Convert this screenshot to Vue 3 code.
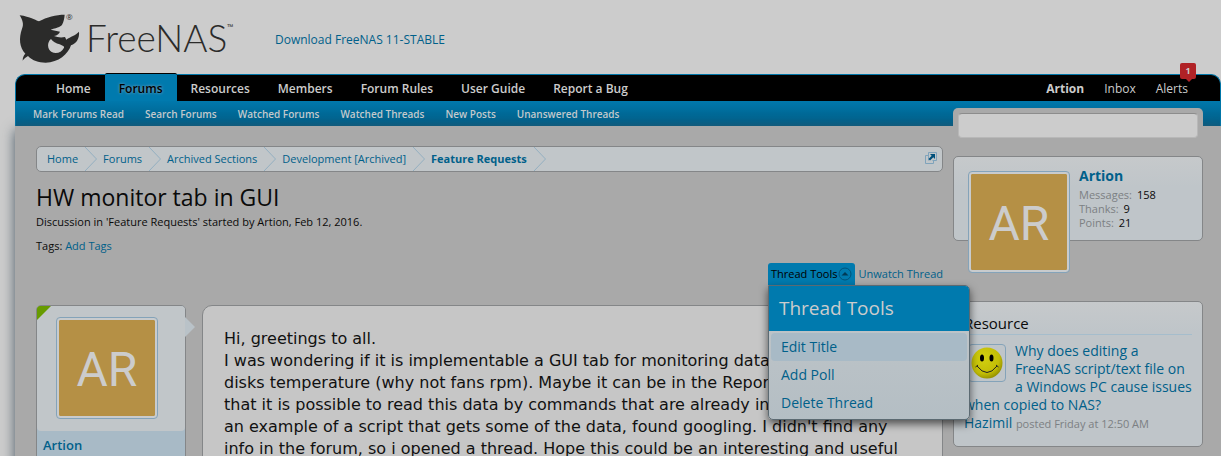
<template>
  <div class="page">
    <header class="masthead">
      <a class="brand" href="#" aria-label="FreeNAS">
        <svg class="brand-mark" viewBox="54 34 186 156" aria-hidden="true">
          <path
            fill-rule="evenodd"
            d="M59 44C75 46 88 50 95 53C102 56 110 60 117 62C140 49 168 42 194 42C193 54 191 62 187 71C184 77 176 81 152 87L180 93C177 99 172 104 162 106C172 110 183 112 195 109L199 117C212 107 226 105 237 93C239 112 230 128 213 134C205 160 175 186 137 186C115 186 98 180 84 166C78 170 72 174 68 180C68 170 71 164 76 159C58 140 56 112 66 84C72 72 68 58 59 44ZM153 115C141 124 141 146 155 154C169 161 185 155 192 141C194 137 188 135 179 131C168 128 158 122 153 115Z"
          />
        </svg>
        <sup class="reg">®</sup>
        <span class="brand-name">FreeNAS</span>
        <sup class="tm">™</sup>
      </a>
      <a class="download" href="#">Download FreeNAS 11-STABLE</a>
    </header>

    <nav class="navigation">
      <div class="tabs">
        <a v-for="tab in tabs" :key="tab" href="#" class="tab" :class="{ selected: tab === 'Forums' }">{{ tab }}</a>
        <div class="account">
          <a href="#" class="account-name">Artion</a>
          <a href="#">Inbox</a>
          <a href="#" class="alerts">Alerts<span class="balloon">1</span></a>
        </div>
      </div>
      <div class="sub-links">
        <a v-for="link in subLinks" :key="link" href="#">{{ link }}</a>
      </div>
    </nav>

    <div class="content">
      <main class="main">
        <nav class="breadcrumb" aria-label="Breadcrumb">
          <a v-for="crumb in crumbs" :key="crumb" href="#" class="crumb">
            {{ crumb }}
            <svg class="arrow" viewBox="0 0 12 24" aria-hidden="true"><path d="M0 0L11.500 12L0 24" /></svg>
          </a>
          <button type="button" class="jump" aria-label="Open quick navigation">
            <svg viewBox="0 0 14 14" aria-hidden="true">
              <path class="jump-box" d="M4 4.500H1.500V12.500H9.500V10M4.500 9.500V1.500H12.500V9.500H8.500" />
              <path class="jump-arrow" d="M6 3H11V8L9.300 6.300L6 9.500L4.500 8L7.700 4.700Z" />
            </svg>
          </button>
        </nav>

        <h1>HW monitor tab in GUI</h1>
        <p class="description">Discussion in 'Feature Requests' started by Artion, Feb 12, 2016.</p>
        <p class="tags">Tags: <a href="#">Add Tags</a></p>

        <div class="thread-links">
          <div class="popup">
            <button type="button" class="popup-control" aria-expanded="true">
              Thread Tools
              <svg viewBox="0 0 14 14" aria-hidden="true">
                <circle cx="7" cy="7" r="6" />
                <path d="M3.500 8.500L7 5L10.500 8.500Z" />
              </svg>
            </button>
            <div class="menu">
              <h3>Thread Tools</h3>
              <ul>
                <li v-for="(item, i) in menuItems" :key="item">
                  <a href="#" :class="{ active: i === 0 }">{{ item }}</a>
                </li>
              </ul>
            </div>
          </div>
          <a href="#">Unwatch Thread</a>
        </div>

        <article class="message">
          <aside class="user-card">
            <div class="avatar-holder">
              <span class="avatar">AR</span>
            </div>
            <a href="#" class="username">Artion</a>
          </aside>
          <div class="message-body">
            <template v-for="(line, i) in message" :key="i">{{ line }}<br /></template>
          </div>
        </article>
      </main>

      <aside class="sidebar">
        <form class="search" @submit.prevent>
          <input v-model="query" type="text" aria-label="Search" />
        </form>

        <section class="panel visitor">
          <span class="avatar">AR</span>
          <div class="visitor-info">
            <a href="#" class="visitor-name">Artion</a>
            <dl v-for="stat in stats" :key="stat.label">
              <dt>{{ stat.label }}:</dt>
              <dd>{{ stat.value }}</dd>
            </dl>
          </div>
        </section>

        <section class="panel resource">
          <h3>Resource</h3>
          <a href="#" class="thumb" aria-label="Hazimil">
            <svg viewBox="0 0 32 32" aria-hidden="true">
              <defs>
                <radialGradient id="face" cx="0.4" cy="0.35" r="0.7">
                  <stop offset="0" stop-color="#d2d010" />
                  <stop offset="0.7" stop-color="#c2bd06" />
                  <stop offset="1" stop-color="#8f8b00" />
                </radialGradient>
              </defs>
              <circle cx="16" cy="16" r="15.500" fill="url(#face)" />
              <ellipse cx="11" cy="11" rx="2" ry="3.500" />
              <ellipse cx="20.500" cy="11" rx="2" ry="3.500" />
              <path d="M6 19Q16 32 26 19M4.500 20L7 18M25 18L27.500 20" class="smile" />
            </svg>
          </a>
          <p>
            <a href="#">Why does editing a FreeNAS script/text file on a Windows PC cause issues when copied to NAS?</a>
          </p>
          <p><a href="#">Hazimil</a> <span class="posted">posted Friday at 12:50 AM</span></p>
        </section>
      </aside>
    </div>
  </div>
</template>

<script setup>
import { ref } from "vue"

const query = ref("")

const tabs = ["Home", "Forums", "Resources", "Members", "Forum Rules", "User Guide", "Report a Bug"]
const subLinks = ["Mark Forums Read", "Search Forums", "Watched Forums", "Watched Threads", "New Posts", "Unanswered Threads"]
const crumbs = ["Home", "Forums", "Archived Sections", "Development [Archived]", "Feature Requests"]
const menuItems = ["Edit Title", "Add Poll", "Delete Thread"]
const stats = [
  { label: "Messages", value: 158 },
  { label: "Thanks", value: 9 },
  { label: "Points", value: 21 },
]
const message = [
  "Hi, greetings to all.",
  "I was wondering if it is implementable a GUI tab for monitoring data like",
  "disks temperature (why not fans rpm). Maybe it can be in the Reporting. I see",
  "that it is possible to read this data by commands that are already in. This is",
  "an example of a script that gets some of the data, found googling. I didn't find any",
  "info in the forum, so i opened a thread. Hope this could be an interesting and useful",
]
</script>

<style>
html {
  background: #cccccc;
  scrollbar-width: none;
}
</style>

<style scoped>
.page {
  padding-left: 15px;
  font-family: "Open Sans", "Trebuchet MS", sans-serif;
  font-size: 11px;
  line-height: 14px;
  color: #0a0a0a;
}

a {
  color: #00608a;
  text-decoration: none;
}

h1, h3, p, ul, dl, dd {
  margin: 0;
  padding: 0;
  font-weight: 400;
}

ul {
  list-style: none;
}

button {
  border: none;
  padding: 0;
  background: none;
  font: inherit;
  cursor: pointer;
}

.masthead {
  display: flex;
  align-items: center;
  height: 74px;
  padding-top: 1px;
  box-sizing: border-box;
}

.brand {
  display: flex;
  align-items: center;
  width: 260px;
  padding-left: 3px;
  box-sizing: border-box;
  color: #2b2b2a;
}

.brand-mark {
  width: 62px;
  height: 52px;
  fill: currentColor;
}

.reg,
.tm {
  align-self: flex-start;
  font-size: 8px;
  line-height: 10px;
  width: 8px;
}

.reg {
  margin-left: -14px;
}

.tm {
  margin-top: 10px;
}

.brand-name {
  margin-left: 12px;
  font-family: Lato, sans-serif;
  font-size: 37px;
  font-weight: 300;
  line-height: 48px;
}

.download {
  padding-top: 4px;
  font-size: 12px;
  line-height: 16px;
}

.navigation {
  border: 1px solid #0076a8;
  border-bottom: none;
  border-radius: 10px 10px 0 0;
  background: #000;
}

.tabs {
  display: flex;
  height: 26px;
  padding: 0 22px 0 26px;
}

.tabs a {
  padding: 0 14px;
  color: #cccccc;
  font-size: 12px;
  font-weight: 600;
  line-height: 27px;
}

.tabs .selected {
  margin-top: -2px;
  border-top: 1px solid #000;
  border-radius: 2px 2px 0 0;
  background: #007aae;
  color: #000;
  line-height: 30px;
  text-shadow: 0 0 3px #9ab;
}

.account {
  display: flex;
  margin-left: auto;
}

.account a {
  padding: 0 10px;
  font-weight: 400;
}

.account .account-name {
  font-weight: 700;
}

.alerts {
  position: relative;
}

.balloon {
  position: absolute;
  top: -12px;
  right: 2px;
  width: 16px;
  border-radius: 2px;
  background: #b02226;
  font-size: 9px;
  font-weight: 700;
  line-height: 16px;
  text-align: center;
}

.balloon::after {
  content: "";
  position: absolute;
  top: 16px;
  right: 4px;
  border: 3px solid transparent;
  border-top-color: #b02226;
  border-bottom: none;
}

.sub-links {
  display: flex;
  gap: 21px;
  height: 25px;
  padding-left: 17px;
  background: linear-gradient(#0078ac, #005c84);
}

.sub-links a {
  color: #c4cacd;
  font-size: 10px;
  font-weight: 600;
  line-height: 26px;
}

.content {
  display: grid;
  grid-template-columns: minmax(0, 1fr) 250px;
  gap: 10px;
  padding: 0 18px 20px 21px;
  background: #a9a9a9;
  box-shadow: 0 4px 12px #4a5a66;
  clip-path: inset(-18px 0 0 -15px);
}

.main {
  padding-top: 20px;
}

.breadcrumb {
  display: flex;
  height: 24px;
  padding-left: 4px;
  border: 1px solid #848688;
  border-radius: 5px;
  background: #c1c6c9;
}

.crumb {
  display: flex;
  gap: 7px;
  padding-left: 6px;
  line-height: 24px;
}

.crumb:nth-of-type(5) {
  font-weight: 700;
}

.arrow {
  width: 12px;
  height: 24px;
  fill: none;
  stroke: #93afc0;
}

.jump {
  width: 14px;
  height: 14px;
  margin: 4px 4px 0 auto;
}

.jump svg {
  display: block;
}

.jump-box {
  fill: none;
  stroke: #7fa3bb;
}

.jump-arrow {
  fill: #004f7a;
}

h1 {
  margin-top: 10px;
  font-size: 23px;
  line-height: 30px;
}

.description {
  margin-top: 3px;
}

.tags {
  margin-top: 10px;
}

.thread-links {
  display: flex;
  justify-content: flex-end;
  gap: 3px;
  margin-top: 10px;
  line-height: 22px;
}

.popup {
  position: relative;
}

.popup-control {
  display: flex;
  align-items: center;
  gap: 1px;
  height: 22px;
  padding: 0 3px;
  border-radius: 3px 3px 0 0;
  background: #007aae;
  color: #000;
}

.popup-control svg {
  width: 14px;
  height: 14px;
}

.popup-control circle {
  fill: none;
  stroke: #00537a;
}

.popup-control path {
  fill: #003a57;
}

.menu {
  position: absolute;
  z-index: 2;
  top: 22px;
  left: 0;
  width: 202px;
  box-sizing: border-box;
  border: 1px solid #5c6a72;
  border-radius: 0 5px 5px 5px;
  background: linear-gradient(#c1c6c9, #b4bec4);
  box-shadow: 0 4px 8px rgba(0, 0, 0, 0.6);
  overflow: hidden;
}

.menu h3 {
  padding: 0 10px;
  background: #007aae;
  color: #cccccc;
  font-size: 19px;
  line-height: 45px;
}

.menu ul {
  padding: 2px;
}

.menu li a {
  display: block;
  padding: 0 10px;
  border-radius: 4px;
  font-size: 14px;
  line-height: 28px;
}

.menu li .active {
  background: #a8bac6;
}

.message {
  display: flex;
  gap: 16px;
  margin-top: 20px;
}

.user-card {
  position: relative;
  flex: none;
  width: 148px;
  border: 1px solid #848688;
  border-radius: 5px;
  background: #a8bac6;
}

.user-card::before {
  content: "";
  position: absolute;
  top: 0;
  left: 0;
  border: 7px solid transparent;
  border-top-color: #679b00;
  border-left-color: #679b00;
  border-top-left-radius: 4px;
}

.user-card::after {
  content: "";
  position: absolute;
  top: 11px;
  right: -10px;
  border: 10px solid transparent;
  border-left-color: #b9c2c8;
  border-right: none;
}

.avatar-holder {
  display: flex;
  height: 125px;
  padding: 11px 0 0 19px;
  box-sizing: border-box;
  border-radius: 4px;
  background: #c1c6c9;
}

.avatar {
  flex: none;
  width: 96px;
  height: 96px;
  padding: 2px;
  border: 1px solid #84a3b9;
  border-radius: 4px;
  background: #b59045 content-box;
  box-shadow: inset 0 0 0 2px #c8cbcd;
  color: #cccccc;
  font-family: Roboto, sans-serif;
  font-size: 48px;
  line-height: 100px;
  text-align: center;
}

.username {
  display: block;
  padding: 0 6px;
  font-size: 13px;
  font-weight: 600;
  line-height: 28px;
}

.message-body {
  flex: 1;
  min-width: 0;
  padding: 22px 21px;
  border: 1px solid #848688;
  border-radius: 10px;
  background: #c6c6c6;
  color: #111;
  font-family: "DejaVu Sans", Verdana, sans-serif;
  font-size: 16px;
  line-height: 22px;
  white-space: nowrap;
}

.sidebar {
  margin-top: -18px;
}

.search {
  padding: 5px;
  border-radius: 5px 5px 0 0;
  background: #a9a9a9;
}

.search input {
  display: block;
  width: 100%;
  height: 25px;
  box-sizing: border-box;
  border: 1px solid #b8b8b8;
  border-top-color: #8c8c8c;
  border-radius: 4px;
  background: #cccccc;
  font: inherit;
  outline: none;
}

.panel {
  border: 1px solid #848688;
  border-radius: 5px;
  background: linear-gradient(#c6c9cb, #bfc5c9 30px);
}

.visitor {
  display: flex;
  gap: 9px;
  height: 85px;
  margin-top: 13px;
  padding-left: 14px;
  box-sizing: border-box;
}

.visitor .avatar {
  margin-top: 14px;
}

.visitor-info {
  padding-top: 10px;
}

.visitor-name {
  display: block;
  margin-bottom: 3px;
  font-size: 14px;
  font-weight: 700;
  line-height: 18px;
}

dl {
  display: flex;
  gap: 5px;
}

dt {
  color: #7c8083;
}

.resource {
  margin-top: 60px;
  padding: 11px 10px 13px;
}

.resource h3 {
  margin-bottom: 7px;
  border-bottom: 1px solid #a5bdcc;
  font-size: 15px;
  line-height: 21px;
}

.resource p {
  font-size: 14px;
  line-height: 18px;
}

.thumb {
  float: left;
  width: 32px;
  height: 32px;
  margin: 2px 9px 12px 4px;
  padding: 2px;
  border: 1px solid #84a3b9;
  border-radius: 4px;
}

.thumb svg {
  display: block;
}

.smile {
  fill: none;
  stroke: #222;
}

.posted {
  color: #7c8083;
  font-size: 11px;
}
</style>
